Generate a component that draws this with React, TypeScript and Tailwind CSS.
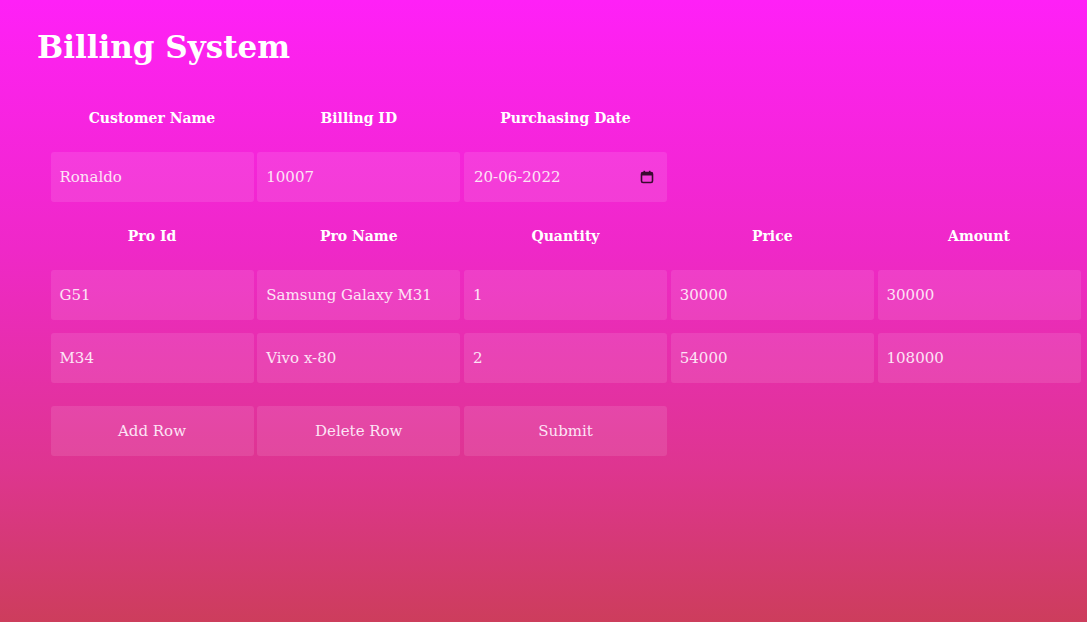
import React from "react";

const font = { fontFamily: '"DejaVu Serif", "Liberation Serif", serif' };

function Cell({ children, center = false }: { children: React.ReactNode; center?: boolean }) {
  return (
    <div
      className={`h-[50px] rounded-[3px] bg-white/10 flex items-center text-[15px] text-[#fde4f6] ${
        center ? "justify-center" : "pl-[9px]"
      }`}
    >
      {children}
    </div>
  );
}

function Head({ children }: { children: React.ReactNode }) {
  return (
    <div className="h-[60px] flex items-center justify-center text-[14px] font-bold text-white">{children}</div>
  );
}

export default function App() {
  return (
    <div
      className="min-h-[622px] w-full bg-[linear-gradient(to_bottom,#ff20f7_0%,#ef28c8_40%,#de3590_75%,#cd3d5c_100%)]"
      style={font}
    >
      <h1 className="pl-[37px] pt-[24px] text-[31px] leading-[46px] font-bold text-white">Billing System</h1>
      <div className="pl-[50.5px] pt-[18px]">
        <div className="grid grid-cols-[repeat(5,203px)] gap-x-[3.75px] gap-y-[4px]">
          <Head>Customer Name</Head>
          <Head>Billing ID</Head>
          <Head>Purchasing Date</Head>
          <div />
          <div />
          <Cell>Ronaldo</Cell>
          <Cell>10007</Cell>
          <div className="h-[50px] rounded-[3px] bg-white/10 flex items-center justify-between pl-[10px] pr-[13px] text-[15px] text-[#fde4f6]">
            <span>20-06-2022</span>
            <svg width="14" height="14" viewBox="0 0 14 14" fill="none">
              <rect x="1.5" y="2.5" width="11" height="10" rx="1.5" stroke="#3a0a30" strokeWidth="1.6" />
              <rect x="1.5" y="2.5" width="11" height="3" fill="#3a0a30" />
              <rect x="3.5" y="0.8" width="1.6" height="2.5" fill="#3a0a30" />
              <rect x="8.9" y="0.8" width="1.6" height="2.5" fill="#3a0a30" />
            </svg>
          </div>
          <div />
          <div />
          <Head>Pro Id</Head>
          <Head>Pro Name</Head>
          <Head>Quantity</Head>
          <Head>Price</Head>
          <Head>Amount</Head>
        </div>
        <div className="grid grid-cols-[repeat(5,203px)] gap-x-[3.75px] gap-y-[13px] mt-[4px]">
          <Cell>G51</Cell>
          <Cell>Samsung Galaxy M31</Cell>
          <Cell>1</Cell>
          <Cell>30000</Cell>
          <Cell>30000</Cell>
          <Cell>M34</Cell>
          <Cell>Vivo x-80</Cell>
          <Cell>2</Cell>
          <Cell>54000</Cell>
          <Cell>108000</Cell>
        </div>
        <div className="grid grid-cols-[repeat(5,203px)] gap-x-[3.75px] mt-[23px]">
          <Cell center>Add Row</Cell>
          <Cell center>Delete Row</Cell>
          <Cell center>Submit</Cell>
        </div>
      </div>
    </div>
  );
}
